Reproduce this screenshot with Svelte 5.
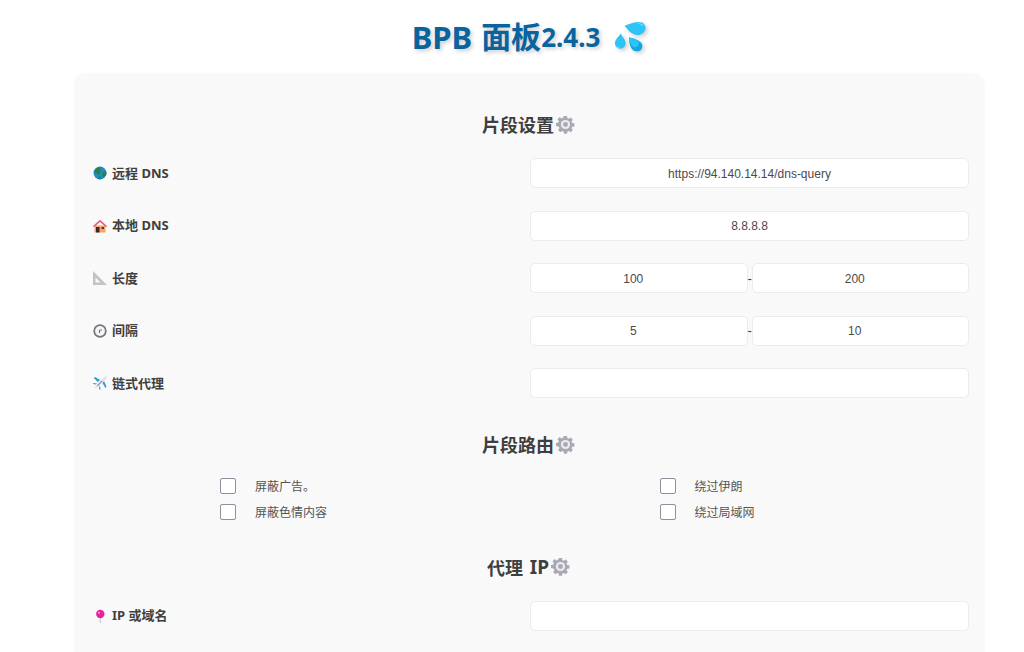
<script>
  const fragmentRows = [
    { label: '远程 DNS', icon: 'globe', type: 'text', values: ['https://94.140.14.14/dns-query'] },
    { label: '本地 DNS', icon: 'house', type: 'text', values: ['8.8.8.8'] },
    { label: '长度', icon: 'ruler', type: 'number', values: ['100', '200'] },
    { label: '间隔', icon: 'clock', type: 'number', values: ['5', '10'] },
    { label: '链式代理', icon: 'plane', type: 'text', values: [''] }
  ];
  const routing = ['屏蔽广告。', '绕过伊朗', '屏蔽色情内容', '绕过局域网'];
</script>

{#snippet gear()}
  <svg class="gear" viewBox="0 0 20 20">
    <path fill="#a9a9b3" d="M8.400 1h3.200l.4 2.400 1.500.6 2-1.400 2.300 2.300-1.400 2 .6 1.500 2.400.4v3.200l-2.400.4-.6 1.500 1.400 2-2.300 2.300-2-1.400-1.500.6-.4 2.400H8.400l-.4-2.400-1.500-.6-2 1.400-2.300-2.300 1.400-2-.6-1.500L0 11.600V8.400l2.400-.4.6-1.500-1.400-2 2.300-2.300 2 1.400 1.500-.6z"/>
    <circle cx="10" cy="10" r="4.800" fill="#ececf0"/>
    <circle cx="10" cy="10" r="2.600" fill="#a9a9b3"/>
  </svg>
{/snippet}

{#snippet icon(name)}
  <svg class="icon" viewBox="0 0 14 14">
    {#if name === 'globe'}
      <circle cx="7" cy="7" r="6.500" fill="#1a8fc4"/>
      <path fill="#2f7d4f" d="M3 2.500 6.500 1 8 3 6.500 5 7.500 7 5.500 9 3.500 7 1 6zM9.500 6l3.500-.5.5 3-2.500 3-1.500-2zM5.500 10.500 7.500 10.800 7 13.500 5.500 13z"/>
    {:else if name === 'house'}
      <path fill="#f2a56f" d="M1.500 6.500h11V13.500h-11z"/>
      <path fill="#e0607a" d="M7 .8 0 7l1 1.200L7 3l6 5.200L14 7z"/>
      <path fill="#3b2a26" d="M3 8h3.500v5.500H3z"/>
      <path fill="#4b3a36" d="M8.500 8h2.500v2H8.500z"/>
    {:else if name === 'ruler'}
      <path fill-rule="evenodd" fill="#c2c2c8" d="M0 0 14 14H0zM2.500 6.500v5h5z"/>
    {:else if name === 'clock'}
      <circle cx="7" cy="7" r="6.700" fill="#76767e"/>
      <circle cx="7" cy="7" r="4.900" fill="#f5f5f7"/>
      <path fill="none" stroke="#e0405a" stroke-width="1.200" d="M6.500 9V6"/>
      <path fill="none" stroke="#76767e" stroke-width="1" d="M6.500 6H9"/>
    {:else if name === 'plane'}
      <path fill="#1f9be0" d="M7 4 2 1 .8 2l4 4zM9.500 7l3 5 1-1.200-2.500-5.800zM3 8.500 0 8l.5-1L4 7.500zM6 11l.5 3 1-.5L7 10z"/>
      <path fill="#dfe5ea" d="M13.500.5c.7.700.4 1.800-.4 2.600L4.500 11.500 1.500 12.800 2.700 9.800 11 1.200c.9-.8 1.800-1.300 2.500-.7z"/>
      <path fill="#7b8a99" d="M4 9.500l5-5 .7.700-5 5z"/>
    {:else}
      <circle cx="7.300" cy="5" r="4.200" fill="#ec1f9c"/>
      <circle cx="6" cy="3.700" r="1" fill="#f9a8dc"/>
      <path fill="none" stroke="#c9c9cf" stroke-width="1.200" d="M7.300 9v5"/>
    {/if}
  </svg>
{/snippet}

<div class="page">
  <h1><span class="brand">BPB</span>面板<span class="version">2.4.3</span>
    <svg class="drops" viewBox="0 0 33 33">
      <path fill="#2cc4f7" d="M11 5C15 3 21 1 26 1c4 0 7 3 6.500 7-.5 4-5 7-9 6.500C18 14 14 9 11 5z"/>
      <path fill="#8fe3fc" d="M24 2.500c3-.5 5.500.5 6.500 3-2-1.500-4-2.500-6.500-3z"/>
      <path fill="#2cc4f7" d="M7 13c1 3 5 6 5 10 0 3-2.500 5.500-5.500 5.500S1 26 1 23c0-4 4-7 6-10z"/>
      <path fill="#0fa8e0" d="M15.500 17c4 .5 9 2 12 5 2.500 2.500 2 6 0 8-2 2-5.500 2-8 0-3-2.500-4-8-4-13z"/>
      <path fill="#2cc4f7" d="M15.500 17c4 .5 8 2 10 5 .5 3-1.500 6-5 5-3-1.500-4.500-5-5-10z"/>
      <path fill="#8fe3fc" d="M3 25c.5 1.500 1.500 2 3 2-1.500 1-3 0-3-2z"/>
    </svg>
  </h1>

  <form class="card">
    <h2>片段设置{@render gear()}</h2>
    {#each fragmentRows as row}
      <div class="row">
        <label class="row-label">{@render icon(row.icon)}<span class="label-text">{row.label}</span></label>
        <div class="fields">
          {#each row.values as value, i}
            {#if i > 0}<span class="dash">-</span>{/if}
            <input type={row.type} {value} />
          {/each}
        </div>
      </div>
    {/each}

    <h2 class="routing-title">片段路由{@render gear()}</h2>
    <div class="routing">
      {#each routing as item}
        <div class="check">
          <input type="checkbox" />
          <span>{item}</span>
        </div>
      {/each}
    </div>

    <h2 class="proxy-title">代理 <span class="proxy-ip">IP</span>{@render gear()}</h2>
    <div class="row">
      <label class="row-label">{@render icon('pin')}<span class="label-text">IP 或域名</span></label>
      <div class="fields"><input type="text" value="" /></div>
    </div>
  </form>
</div>

<style>
  :global(html), :global(body) {
    margin: 0;
    height: 652px;
    overflow: hidden;
    background: #fff;
  }

  .page {
    width: 909px;
    margin-left: 75px;
    font-family: "Noto Sans", "Noto Sans CJK SC", sans-serif;
    color: #3f3f3f;
  }

  h1 {
    margin: 0;
    height: 74px;
    box-sizing: border-box;
    padding: 0 1px 1px 0;
    display: flex;
    justify-content: center;
    align-items: center;
    font-size: 30px;
    line-height: 46px;
    color: #09639f;
    font-weight: 700;
    text-shadow: 2px 2px 4px rgba(0, 0, 0, 0.2);
    white-space: pre;
  }

  .brand {
    margin-right: 9px;
    font-size: 31px;
  }

  .version {
    font-size: 26px;
  }

  .drops {
    width: 32px;
    height: 32px;
    margin-left: 14px;
    filter: drop-shadow(2px 2px 2px rgba(0, 0, 0, 0.2));
  }

  .card {
    box-sizing: border-box;
    height: 640px;
    background: #f9f9f9;
    border-radius: 10px;
    box-shadow: 0 0 2px rgba(0, 0, 0, 0.08);
    padding: 35px 15px 0;
  }

  h2 {
    margin: 0 0 19px;
    padding-right: 2px;
    display: flex;
    justify-content: center;
    align-items: center;
    gap: 2px;
    height: 30px;
    font-size: 18px;
    font-weight: 700;
    color: #3f3f3f;
    white-space: pre;
  }

  .routing-title {
    margin: 0 0 18px;
    padding-top: 8px;
    height: 31px;
  }

  .proxy-title {
    margin: 0 0 19px;
    padding-top: 16px;
  }

  .proxy-ip {
    font-size: 19px;
  }

  .gear {
    width: 19px;
    height: 19px;
  }

  .row {
    display: flex;
    align-items: center;
    height: 30px;
    margin-bottom: 22.500px;
    padding-left: 3px;
  }

  .row-label {
    display: flex;
    align-items: center;
    gap: 5px;
    width: 437px;
    font-size: 13px;
    font-weight: 700;
    color: #3f3f3f;
    white-space: pre;
  }

  .label-text {
    position: relative;
    top: -1px;
  }

  .icon {
    width: 14px;
    height: 14px;
  }

  .fields {
    flex: 1;
    display: flex;
    align-items: center;
    min-width: 0;
  }

  .dash {
    width: 4px;
    font-family: "Liberation Sans", sans-serif;
    font-size: 13px;
    text-align: center;
  }

  .fields input {
    flex: 1;
    min-width: 0;
    box-sizing: border-box;
    height: 30px;
    padding: 1px 8px 0;
    background: #fff;
    border: 1px solid #ececec;
    border-radius: 5px;
    outline: none;
    text-align: center;
    font-family: "Liberation Sans", sans-serif;
    font-size: 12px;
    color: #4a4a4a;
  }

  .fields input[type="number"] {
    padding-left: 12px;
  }

  .routing {
    display: grid;
    grid-template-columns: 1fr 1fr;
    row-gap: 10px;
    margin-bottom: 16px;
  }

  .check {
    display: flex;
    align-items: center;
    height: 16px;
    padding-left: 130px;
    font-size: 12px;
    color: #555;
  }

  .check input {
    appearance: none;
    box-sizing: border-box;
    width: 16px;
    height: 16px;
    margin: 0 19px 0 0;
    background: #fff;
    border: 1px solid #8f8f9d;
    border-radius: 2px;
  }
</style>
